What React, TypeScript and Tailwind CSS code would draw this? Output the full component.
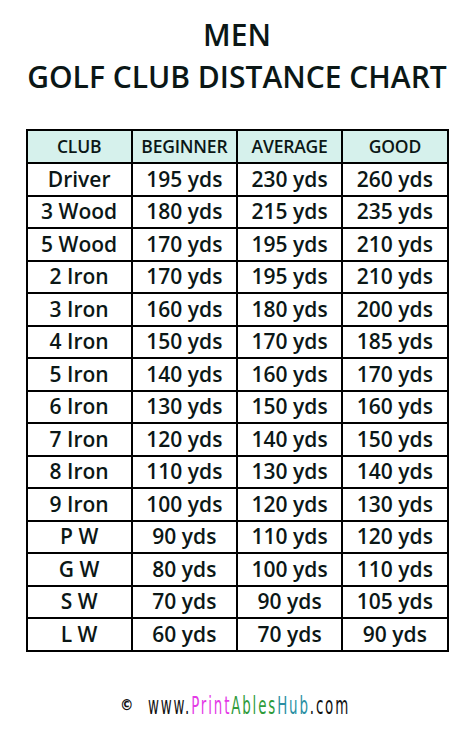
import React from "react";

const rows: [string, string, string, string][] = [
  ["Driver", "195 yds", "230 yds", "260 yds"],
  ["3 Wood", "180 yds", "215 yds", "235 yds"],
  ["5 Wood", "170 yds", "195 yds", "210 yds"],
  ["2 Iron", "170 yds", "195 yds", "210 yds"],
  ["3 Iron", "160 yds", "180 yds", "200 yds"],
  ["4 Iron", "150 yds", "170 yds", "185 yds"],
  ["5 Iron", "140 yds", "160 yds", "170 yds"],
  ["6 Iron", "130 yds", "150 yds", "160 yds"],
  ["7 Iron", "120 yds", "140 yds", "150 yds"],
  ["8 Iron", "110 yds", "130 yds", "140 yds"],
  ["9 Iron", "100 yds", "120 yds", "130 yds"],
  ["P W", "90 yds", "110 yds", "120 yds"],
  ["G W", "80 yds", "100 yds", "110 yds"],
  ["S W", "70 yds", "90 yds", "105 yds"],
  ["L W", "60 yds", "70 yds", "90 yds"],
];

export default function App() {
  return (
    <div
      className="w-[474px] h-[732px] bg-white flex flex-col items-center text-[#0b1716]"
      style={{ fontFamily: '"Open Sans", "Noto Sans", sans-serif' }}
    >
      <div className="pt-[14px] flex flex-col items-center font-semibold text-[30px] leading-[42px]">
        <div>MEN</div>
        <div>GOLF CLUB DISTANCE CHART</div>
      </div>
      <table className="mt-[31px] w-[423px] border-collapse border-2 border-black table-fixed">
        <thead>
          <tr className="h-[33px] bg-[#d6f1ec]">
            {["CLUB", "BEGINNER", "AVERAGE", "GOOD"].map((h) => (
              <th
                key={h}
                className="border-2 border-black text-[17.5px] font-semibold text-center p-0 leading-none tracking-[-0.2px]"
              >
                {h}
              </th>
            ))}
          </tr>
        </thead>
        <tbody>
          {rows.map((r) => (
            <tr key={r[0]} className="h-[32.5px]">
              {r.map((c, i) => (
                <td
                  key={i}
                  className="border-2 border-black text-[21px] font-semibold text-center p-0 leading-none"
                >
                  {c}
                </td>
              ))}
            </tr>
          ))}
        </tbody>
      </table>
      <div
        className="mt-[42px] w-full pl-[120px] flex items-center text-[24px] leading-none text-[#111]"
        style={{ fontFamily: '"DejaVu Sans Condensed", "DejaVu Sans", sans-serif' }}
      >
        <span className="text-[15px] font-bold w-[30px]">©</span>
        <span className="inline-block origin-left scale-x-[0.62] whitespace-nowrap tracking-[3px]">
          www.
          <span className="text-[#e43ae6]">Print</span>
          <span className="text-[#2f9b3b]">Ables</span>
          <span className="text-[#2a8fa3]">Hub</span>
          .com
        </span>
      </div>
    </div>
  );
}
